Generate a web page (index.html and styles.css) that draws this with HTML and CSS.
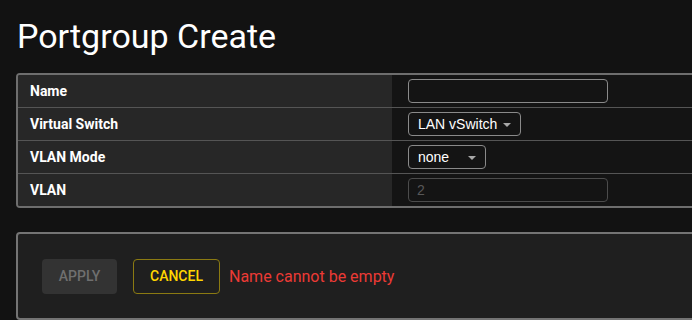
FILE: index.html
```html
<!DOCTYPE html>
<html lang="en">
<head>
    <meta charset="UTF-8">
    <title>Portgroup Create</title>
    <link rel="stylesheet" href="styles.css">
</head>
<body>
    <div class="page">
        <h1>Portgroup Create</h1>

        <table class="form-table">
            <tr>
                <td class="label">Name</td>
                <td class="value"><input type="text" class="field" id="name"></td>
            </tr>
            <tr>
                <td class="label">Virtual Switch</td>
                <td class="value">
                    <div class="select select-switch">LAN vSwitch <span class="caret"></span></div>
                </td>
            </tr>
            <tr>
                <td class="label">VLAN Mode</td>
                <td class="value">
                    <div class="select select-mode">none <span class="caret"></span></div>
                </td>
            </tr>
            <tr>
                <td class="label">VLAN</td>
                <td class="value"><input type="text" class="field" placeholder="2" disabled></td>
            </tr>
        </table>

        <div class="actions">
            <button class="btn btn-apply" disabled>Apply</button>
            <button class="btn btn-cancel">Cancel</button>
            <span class="error">Name cannot be empty</span>
        </div>
    </div>
</body>
</html>
```

FILE: styles.css
```css
* {
    margin: 0;
    padding: 0;
    box-sizing: border-box;
}

body {
    background: #121212;
    color: #ffffff;
    font-family: Roboto, 'Liberation Sans', sans-serif;
    overflow: hidden;
}

.page {
    width: 760px;
    padding: 16px 0 0 16px;
}

h1 {
    font-size: 34px;
    font-weight: 400;
    line-height: 40px;
    margin-left: 1px;
    margin-bottom: 17px;
}

.form-table {
    width: 100%;
    border: 2px solid #6e6e6e;
    border-radius: 4px;
    border-spacing: 0;
    border-collapse: separate;
    overflow: hidden;
}

.form-table td {
    height: 33px;
    border-bottom: 1px solid #555555;
    vertical-align: middle;
}

.form-table tr:last-child td {
    height: 32px;
    border-bottom: none;
}

.label {
    width: 374px;
    background: #272727;
    padding-left: 12px;
    font-size: 14px;
    font-weight: 700;
}

.value {
    background: #141414;
    padding-left: 16px;
}

.field {
    display: block;
    width: 200px;
    height: 24px;
    background: #141414;
    border: 1px solid #8a8a8a;
    border-radius: 4px;
    padding: 0 8px;
    color: #ffffff;
    font-family: 'Liberation Sans', Arial, sans-serif;
    font-size: 14px;
    outline: none;
}

.field:disabled {
    border-color: #4c4c4c;
}

.field::placeholder {
    color: #585858;
}

.select {
    display: flex;
    align-items: center;
    justify-content: space-between;
    height: 24px;
    border: 1px solid #8a8a8a;
    border-radius: 4px;
    padding: 0 9px 0 9px;
    font-family: 'Liberation Sans', Arial, sans-serif;
    font-size: 14px;
    color: #ffffff;
}

.select-switch {
    width: 113px;
}

.select-mode {
    width: 78px;
}

.caret {
    width: 0;
    height: 0;
    border-left: 4px solid transparent;
    border-right: 4px solid transparent;
    border-top: 4px solid #a8a8a8;
    margin-top: 1px;
}

.actions {
    display: flex;
    align-items: center;
    margin-top: 24px;
    height: 88px;
    background: #1f1f1f;
    border: 2px solid #747474;
    border-radius: 4px;
    padding: 0 24px;
}

.btn {
    height: 35px;
    border-radius: 4px;
    font-family: Roboto, sans-serif;
    font-size: 14px;
    font-weight: 500;
    text-transform: uppercase;
    background: none;
    border: 1px solid transparent;
}

.btn-apply {
    width: 75px;
    background: #333333;
    color: #6f6f6f;
}

.btn-cancel {
    width: 87px;
    margin-left: 16px;
    border-color: #8b7a12;
    color: #ffd600;
    cursor: pointer;
}

.error {
    margin-left: 9px;
    color: #ec3a35;
    font-size: 16px;
}
```
